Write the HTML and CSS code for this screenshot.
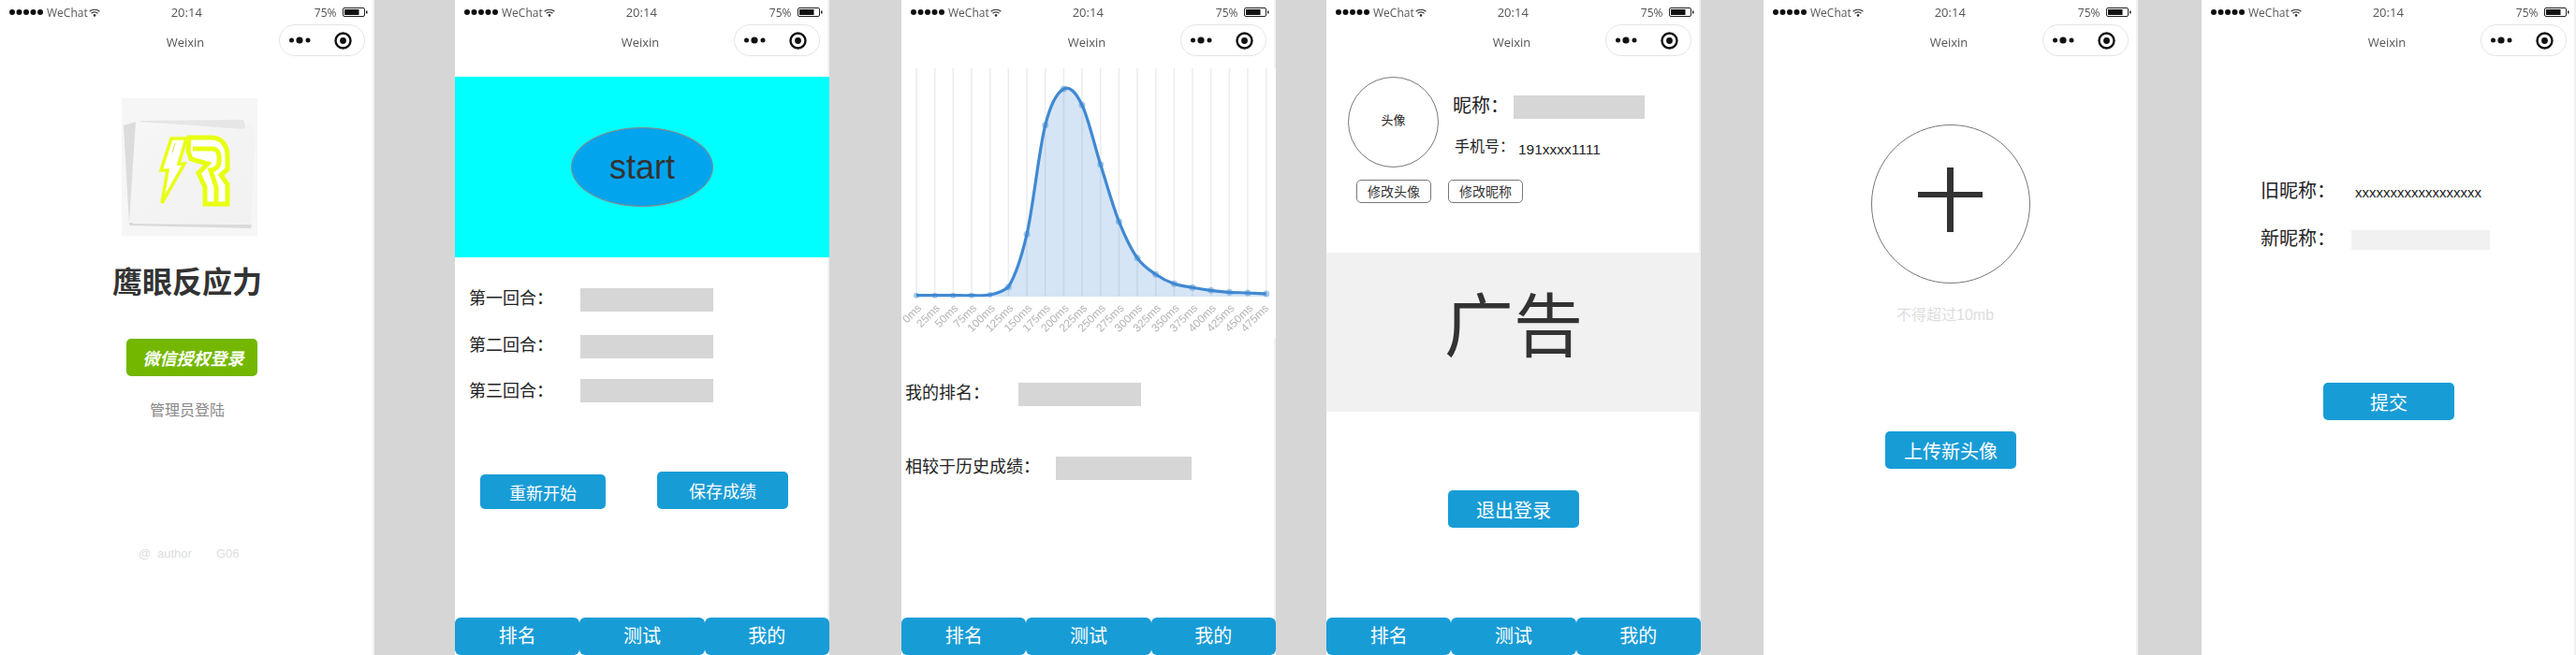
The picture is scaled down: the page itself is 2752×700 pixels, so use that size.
FILE: index.html
```html
<!DOCTYPE html>
<html lang="zh-CN">

<head>
    <meta charset="UTF-8">
    <title>鹰眼反应力</title>
    <link rel="stylesheet" href="styles.css">
</head>

<body>
    <svg class="icon-defs" width="0" height="0">
        <symbol id="signal" viewBox="0 0 37 8">
            <circle cx="3" cy="4" r="3" />
            <circle cx="10.5" cy="4" r="3" />
            <circle cx="18" cy="4" r="3" />
            <circle cx="25.5" cy="4" r="3" />
            <circle cx="33" cy="4" r="3" />
        </symbol>
        <symbol id="wifi" viewBox="0 0 12 9">
            <path d="M0.6 3.2 C3.6 0.6 8.4 0.6 11.4 3.2" fill="none" stroke="#333" stroke-width="1.2" />
            <path d="M2.5 5.2 C4.5 3.6 7.5 3.6 9.5 5.2" fill="none" stroke="#333" stroke-width="1.2" />
            <circle cx="6" cy="7.4" r="1.3" fill="#333" />
        </symbol>
        <symbol id="battery" viewBox="0 0 28 10">
            <rect x="0.5" y="0.5" width="23" height="9" rx="1.5" fill="#fff" stroke="#222" />
            <rect x="2" y="2" width="15.5" height="6" fill="#111" />
            <rect x="25" y="3.5" width="1.5" height="3" fill="#222" />
        </symbol>
        <symbol id="capsule-icons" viewBox="0 0 92 34">
            <circle cx="13.5" cy="17" r="2.5" fill="#111" />
            <circle cx="22" cy="17" r="3.6" fill="#111" />
            <circle cx="31" cy="17" r="2.5" fill="#111" />
            <circle cx="68.5" cy="17.5" r="8" fill="none" stroke="#111" stroke-width="2.4" />
            <circle cx="68.5" cy="17.5" r="3.4" fill="#111" />
        </symbol>
    </svg>

    <div class="screens">

        <!-- login -->
        <section class="phone">
            <header class="top">
                <div class="status">
                    <svg class="signal"><use href="#signal" /></svg>
                    <span class="carrier">WeChat</span>
                    <svg class="wifi"><use href="#wifi" /></svg>
                    <span class="time">20:14</span>
                    <span class="percent">75%</span>
                    <svg class="battery"><use href="#battery" /></svg>
                </div>
                <div class="nav">
                    <span class="nav-title">Weixin</span>
                    <div class="capsule"><svg class="capsule-svg"><use href="#capsule-icons" /></svg></div>
                </div>
            </header>
            <main class="screen-body">
                <div class="logo">
                    <svg viewBox="0 0 145 147" width="145" height="147">
                        <defs>
                            <linearGradient id="sheet" x1="0" y1="0" x2="1" y2="1">
                                <stop offset="0" stop-color="#f7f7f7" />
                                <stop offset="0.5" stop-color="#f3f3f3" />
                                <stop offset="1" stop-color="#f1f1f1" />
                            </linearGradient>
                        </defs>
                        <rect width="145" height="147" fill="#f6f6f6" />
                        <path d="M2 29 L16 25 L12 134 L8 134 Z" fill="#dcdcdc" />
                        <path d="M20 24 L130 23 L133 33 L20 28 Z" fill="#e6e6e6" />
                        <path d="M139 135 L8 134 L8 136 L138 139 Z" fill="#dadada" />
                        <path d="M15 25 C60 28 100 30 130 34 L133 28 C138 28 143 32 143 38 L138 134 L8 133 Z" fill="url(#sheet)" />
                        <path d="M53 43 L69 43 L61 70 L67 70 L43 112 L49 77 L42 77 Z" fill="#fff" stroke="#e8ff14" stroke-width="3.5" stroke-linejoin="miter" />
                        <path d="M57 48 L54 58" stroke="#d9e04a" stroke-width="1" fill="none" />
                        <path d="M72 42 L96 42 C107 42 113 51 113 62 L113 76 L106 82 L113 92 L113 113 L89 113 L89 95 L82 80 L92 70 L74 65 L71 56 Z" fill="#fff" stroke="#e8ff14" stroke-width="5" />
                        <path d="M76 54 L96 54 C102 54 104 58 104 62 L104 68 C104 73 100 76 95 77 L101 95 L101 113" fill="none" stroke="#e8ff14" stroke-width="5" />
                    </svg>
                </div>
                <h1 class="app-title">鹰眼反应力</h1>
                <button class="btn btn-wechat">微信授权登录</button>
                <div class="admin-link">管理员登陆</div>
                <div class="credit">
                    <span class="credit-at">@</span>
                    <span class="credit-author">author</span>
                    <span>G06</span>
                </div>
            </main>
        </section>

        <!-- test -->
        <section class="phone phone-test">
            <header class="top">
                <div class="status">
                    <svg class="signal"><use href="#signal" /></svg>
                    <span class="carrier">WeChat</span>
                    <svg class="wifi"><use href="#wifi" /></svg>
                    <span class="time">20:14</span>
                    <span class="percent">75%</span>
                    <svg class="battery"><use href="#battery" /></svg>
                </div>
                <div class="nav">
                    <span class="nav-title">Weixin</span>
                    <div class="capsule"><svg class="capsule-svg"><use href="#capsule-icons" /></svg></div>
                </div>
            </header>
            <main class="screen-body">
                <div class="start-area">
                    <div class="start-btn">start</div>
                </div>
                <div class="round-row round-first"><span class="round-label">第一回合：</span><span class="value-box round-box"></span></div>
                <div class="round-row round-second"><span class="round-label">第二回合：</span><span class="value-box round-box"></span></div>
                <div class="round-row round-third"><span class="round-label">第三回合：</span><span class="value-box round-box"></span></div>
                <div class="test-actions">
                    <button class="btn btn-restart">重新开始</button>
                    <button class="btn btn-save">保存成绩</button>
                </div>
            </main>
            <nav class="tabs">
                <div class="tab">排名</div>
                <div class="tab">测试</div>
                <div class="tab">我的</div>
            </nav>
        </section>

        <!-- rank -->
        <section class="phone phone-rank">
            <header class="top">
                <div class="status">
                    <svg class="signal"><use href="#signal" /></svg>
                    <span class="carrier">WeChat</span>
                    <svg class="wifi"><use href="#wifi" /></svg>
                    <span class="time">20:14</span>
                    <span class="percent">75%</span>
                    <svg class="battery"><use href="#battery" /></svg>
                </div>
                <div class="nav">
                    <span class="nav-title">Weixin</span>
                    <div class="capsule"><svg class="capsule-svg"><use href="#capsule-icons" /></svg></div>
                </div>
            </header>
            <main class="screen-body">
                <svg class="chart" viewBox="0 0 400 289" width="400" height="289">
                    <g class="chart-grid">
                        <path d="M16 0V244M35.7 0V244M55.3 0V244M75 0V244M94.7 0V244M114.3 0V244M134 0V244M153.7 0V244M173.4 0V244M193 0V244M212.7 0V244M232.4 0V244M252 0V244M271.7 0V244M291.4 0V244M311 0V244M330.7 0V244M350.4 0V244M370 0V244M389.7 0V244" />
                    </g>
                    <path class="chart-area" d="M16 242.7 C22.6 242.7 29.1 242.7 35.7 242.7 C42.3 242.7 48.7 242.7 55.3 242.7 C61.9 242.7 68.4 242.8 75 242.7 C81.6 242.6 88.1 243.2 94.7 242 C101.3 240.8 107.7 239 114.3 233.7 C120.9 222.9 127.4 206.1 134 177.3 C140.6 148.5 147.1 86.6 153.7 60.7 C160.3 34.8 166.8 25.6 173.4 22 C180 18.4 186.4 25.8 193 39.3 C199.6 52.8 206.1 82 212.7 102.7 C219.3 123.4 225.8 147 232.4 163.7 C239 180.4 245.4 193.3 252 202.7 C258.6 212.1 265.1 215.7 271.7 220.3 C278.3 224.9 284.8 228 291.4 230.3 C298 232.6 304.4 233.1 311 234.3 C317.6 235.5 324.1 236.5 330.7 237.3 C337.3 238.1 343.8 238.85 350.4 239.3 C357 239.75 363.4 239.7 370 240 C376.6 240.3 383.1 240.8 389.7 241 V244 H16 Z" />
                    <path class="chart-line" d="M16 242.7 C22.6 242.7 29.1 242.7 35.7 242.7 C42.3 242.7 48.7 242.7 55.3 242.7 C61.9 242.7 68.4 242.8 75 242.7 C81.6 242.6 88.1 243.2 94.7 242 C101.3 240.8 107.7 239 114.3 233.7 C120.9 222.9 127.4 206.1 134 177.3 C140.6 148.5 147.1 86.6 153.7 60.7 C160.3 34.8 166.8 25.6 173.4 22 C180 18.4 186.4 25.8 193 39.3 C199.6 52.8 206.1 82 212.7 102.7 C219.3 123.4 225.8 147 232.4 163.7 C239 180.4 245.4 193.3 252 202.7 C258.6 212.1 265.1 215.7 271.7 220.3 C278.3 224.9 284.8 228 291.4 230.3 C298 232.6 304.4 233.1 311 234.3 C317.6 235.5 324.1 236.5 330.7 237.3 C337.3 238.1 343.8 238.85 350.4 239.3 C357 239.75 363.4 239.7 370 240 C376.6 240.3 383.1 240.8 389.7 241" />
                    <g class="chart-points">
                        <circle cx="16" cy="242.7" r="3" /><circle cx="35.7" cy="242.7" r="3" /><circle cx="55.3" cy="242.7" r="3" /><circle cx="75" cy="242.7" r="3" /><circle cx="94.7" cy="242" r="3" />
                        <circle cx="114.3" cy="233.7" r="3.5" /><circle cx="134" cy="177.3" r="3.5" /><circle cx="153.7" cy="60.7" r="3.5" /><circle cx="173.4" cy="22" r="3.5" /><circle cx="193" cy="39.3" r="3.5" />
                        <circle cx="212.7" cy="102.7" r="3.5" /><circle cx="232.4" cy="163.7" r="3.5" /><circle cx="252" cy="202.7" r="3.5" /><circle cx="271.7" cy="220.3" r="3.5" /><circle cx="291.4" cy="230.3" r="3.5" />
                        <circle cx="311" cy="234.3" r="3.5" /><circle cx="330.7" cy="237.3" r="3.5" /><circle cx="350.4" cy="239.3" r="3.5" /><circle cx="370" cy="240" r="3.5" /><circle cx="389.7" cy="241" r="3.5" />
                    </g>
                    <g class="chart-labels">
                        <text transform="translate(22 257) rotate(-45)">0ms</text>
                        <text transform="translate(41.7 257) rotate(-45)">25ms</text>
                        <text transform="translate(61.3 257) rotate(-45)">50ms</text>
                        <text transform="translate(81 257) rotate(-45)">75ms</text>
                        <text transform="translate(100.7 257) rotate(-45)">100ms</text>
                        <text transform="translate(120.3 257) rotate(-45)">125ms</text>
                        <text transform="translate(140 257) rotate(-45)">150ms</text>
                        <text transform="translate(159.7 257) rotate(-45)">175ms</text>
                        <text transform="translate(179.4 257) rotate(-45)">200ms</text>
                        <text transform="translate(199 257) rotate(-45)">225ms</text>
                        <text transform="translate(218.7 257) rotate(-45)">250ms</text>
                        <text transform="translate(238.4 257) rotate(-45)">275ms</text>
                        <text transform="translate(258 257) rotate(-45)">300ms</text>
                        <text transform="translate(277.7 257) rotate(-45)">325ms</text>
                        <text transform="translate(297.4 257) rotate(-45)">350ms</text>
                        <text transform="translate(317 257) rotate(-45)">375ms</text>
                        <text transform="translate(336.7 257) rotate(-45)">400ms</text>
                        <text transform="translate(356.4 257) rotate(-45)">425ms</text>
                        <text transform="translate(376 257) rotate(-45)">450ms</text>
                        <text transform="translate(393 257) rotate(-45)">475ms</text>
                    </g>
                </svg>
                <div class="rank-row rank-first"><span class="rank-label">我的排名：</span><span class="value-box"></span></div>
                <div class="rank-row rank-second"><span class="rank-label">相较于历史成绩：</span><span class="value-box"></span></div>
            </main>
            <nav class="tabs">
                <div class="tab">排名</div>
                <div class="tab">测试</div>
                <div class="tab">我的</div>
            </nav>
        </section>

        <!-- profile -->
        <section class="phone phone-profile">
            <header class="top">
                <div class="status">
                    <svg class="signal"><use href="#signal" /></svg>
                    <span class="carrier">WeChat</span>
                    <svg class="wifi"><use href="#wifi" /></svg>
                    <span class="time">20:14</span>
                    <span class="percent">75%</span>
                    <svg class="battery"><use href="#battery" /></svg>
                </div>
                <div class="nav">
                    <span class="nav-title">Weixin</span>
                    <div class="capsule"><svg class="capsule-svg"><use href="#capsule-icons" /></svg></div>
                </div>
            </header>
            <main class="screen-body">
                <div class="profile">
                    <div class="profile-top">
                        <div class="avatar">头像</div>
                        <div class="profile-info">
                            <div class="nick-row"><span class="nick-label">昵称：</span><span class="value-box nick-box"></span></div>
                            <div class="phone-row"><span class="phone-label">手机号：</span><span class="phone-value">191xxxx1111</span></div>
                        </div>
                    </div>
                    <div class="profile-actions">
                        <button class="btn-outline">修改头像</button>
                        <button class="btn-outline">修改昵称</button>
                    </div>
                </div>
                <div class="ad">广告</div>
                <button class="btn btn-logout">退出登录</button>
            </main>
            <nav class="tabs">
                <div class="tab">排名</div>
                <div class="tab">测试</div>
                <div class="tab">我的</div>
            </nav>
        </section>

        <!-- upload avatar -->
        <section class="phone phone-upload">
            <header class="top">
                <div class="status">
                    <svg class="signal"><use href="#signal" /></svg>
                    <span class="carrier">WeChat</span>
                    <svg class="wifi"><use href="#wifi" /></svg>
                    <span class="time">20:14</span>
                    <span class="percent">75%</span>
                    <svg class="battery"><use href="#battery" /></svg>
                </div>
                <div class="nav">
                    <span class="nav-title">Weixin</span>
                    <div class="capsule"><svg class="capsule-svg"><use href="#capsule-icons" /></svg></div>
                </div>
            </header>
            <main class="screen-body">
                <div class="upload-circle">
                    <svg class="plus" viewBox="0 0 70 70" width="70" height="70">
                        <rect x="0" y="26" width="69" height="6" fill="#333" />
                        <rect x="31" y="0" width="7" height="69" fill="#333" />
                    </svg>
                </div>
                <div class="upload-hint">不得超过10mb</div>
                <button class="btn btn-upload">上传新头像</button>
            </main>
        </section>

        <!-- change nickname -->
        <section class="phone phone-rename">
            <header class="top">
                <div class="status">
                    <svg class="signal"><use href="#signal" /></svg>
                    <span class="carrier">WeChat</span>
                    <svg class="wifi"><use href="#wifi" /></svg>
                    <span class="time">20:14</span>
                    <span class="percent">75%</span>
                    <svg class="battery"><use href="#battery" /></svg>
                </div>
                <div class="nav">
                    <span class="nav-title">Weixin</span>
                    <div class="capsule"><svg class="capsule-svg"><use href="#capsule-icons" /></svg></div>
                </div>
            </header>
            <main class="screen-body">
                <div class="rename-row rename-old"><span class="rename-label">旧昵称：</span><span class="old-value">xxxxxxxxxxxxxxxxxx</span></div>
                <div class="rename-row rename-new"><span class="rename-label">新昵称：</span><span class="new-input"></span></div>
                <button class="btn btn-submit">提交</button>
            </main>
        </section>

    </div>
</body>

</html>
```

FILE: styles.css
```css
* {
    box-sizing: border-box;
}

body {
    margin: 0;
    background-color: #d6d6d6;
    font-family: "Liberation Sans", "Noto Sans CJK SC", sans-serif;
    color: #222;
}

.icon-defs {
    position: absolute;
}

.screens {
    display: flex;
    width: 2752px;
    height: 700px;
    overflow: hidden;
}

.phone {
    flex: none;
    display: flex;
    flex-direction: column;
    width: 400px;
    height: 700px;
    background-color: #fff;
    box-shadow: inset -2px 0 #f1f1f1;
}

.phone-test {
    margin-left: 86px;
}

.phone-rank {
    margin-left: 77px;
}

.phone-profile {
    margin-left: 54px;
}

.phone-upload {
    margin-left: 67px;
}

.phone-rename {
    margin-left: 68px;
}

/* status bar + nav */
.top {
    flex: none;
    height: 60px;
    font-family: "Open Sans", sans-serif;
    color: #555;
    filter: blur(0.3px);
}

.status {
    display: flex;
    align-items: center;
    height: 26px;
    padding-left: 10px;
}

.signal {
    width: 37px;
    height: 8px;
    fill: #111;
}

.carrier {
    margin-left: 3px;
    font-size: 12px;
}

.wifi {
    width: 12px;
    height: 9px;
    margin-left: 1px;
}

.time {
    margin-left: 76px;
    font-size: 13px;
}

.percent {
    margin-left: 120px;
    font-size: 12px;
}

.battery {
    width: 28px;
    height: 10px;
    margin-left: 6px;
}

.nav {
    display: grid;
    grid-template-columns: 1fr auto 1fr;
    align-items: center;
    height: 34px;
    padding: 0 10px 0 6px;
}

.nav-title {
    grid-column: 2;
    padding-top: 4px;
    font-size: 13px;
}

.capsule {
    grid-column: 3;
    justify-self: end;
    width: 92px;
    height: 34px;
    border: 1px solid #e4e4e4;
    border-radius: 17px;
}

.capsule-svg {
    display: block;
    width: 92px;
    height: 34px;
    margin: -1px;
}

.screen-body {
    flex: 1;
    min-height: 0;
}

/* shared pieces */
.btn {
    display: block;
    width: 140px;
    height: 40px;
    padding: 0;
    border: 0;
    border-radius: 5px;
    background-color: #189cd6;
    color: #fff;
    font-family: inherit;
    font-size: 20px;
}

.value-box {
    display: block;
    flex: none;
    height: 25px;
    background-color: #d6d6d6;
}

.tabs {
    flex: none;
    display: flex;
    height: 40px;
}

.tab {
    flex: 1;
    border-radius: 6px;
    background-color: #189cd6;
    color: #fff;
    font-size: 20px;
    line-height: 40px;
    text-align: center;
}

/* login */
.logo {
    width: 145px;
    height: 147px;
    margin: 45px 0 0 130px;
    filter: blur(0.4px);
}

.logo svg {
    display: block;
}

.app-title {
    width: 160px;
    margin: 30px 0 0 120px;
    color: #333;
    font-size: 32px;
    font-weight: 700;
    line-height: 40px;
}

.btn-wechat {
    margin: 40px 0 0 135px;
    padding-left: 3px;
    background-color: #73b700;
    font-size: 18px;
    font-style: italic;
    font-weight: 700;
}

.admin-link {
    margin: 25px 0 0 160px;
    color: #888;
    font-size: 16px;
    line-height: 24px;
}

.credit {
    display: flex;
    margin: 133px 0 0 148px;
    color: #ddd;
    font-size: 13px;
    line-height: 16px;
}

.credit-at {
    width: 20px;
}

.credit-author {
    width: 63px;
}

/* test */
.start-area {
    display: flex;
    align-items: center;
    justify-content: center;
    height: 193px;
    margin-top: 22px;
    background-color: #0ff;
}

.start-btn {
    width: 152px;
    height: 85px;
    border: 1px solid #888;
    border-radius: 50%;
    background-color: #03a4ee;
    color: #333;
    font-size: 36px;
    line-height: 83px;
    text-align: center;
}

.round-row {
    display: flex;
    margin-left: 15px;
}

.round-first {
    margin-top: 33px;
}

.round-second {
    margin-top: 25px;
}

.round-third {
    margin-top: 22px;
}

.round-label {
    width: 119px;
    font-size: 18px;
    line-height: 22px;
}

.round-third .round-label {
    padding-top: 2px;
}

.round-box {
    width: 142px;
}

.test-actions {
    display: flex;
    align-items: flex-end;
    margin: 74px 0 0 27px;
}

.btn-restart {
    width: 134px;
    height: 37px;
    font-size: 18px;
}

.btn-save {
    margin-left: 55px;
    font-size: 18px;
}

/* rank */
.chart {
    display: block;
    margin-top: 13px;
    overflow: visible;
    background-color: #fff;
    filter: blur(0.4px);
}

.chart-grid path {
    fill: none;
    stroke: #ececf0;
    stroke-width: 1.5;
}

.chart-area {
    fill: rgba(74, 144, 217, 0.23);
}

.chart-line {
    fill: none;
    stroke: #4089d2;
    stroke-width: 3.2;
}

.chart-points circle {
    fill: rgba(63, 136, 208, 0.45);
}

.chart-labels text {
    fill: #b4b4b4;
    font-size: 12px;
    text-anchor: end;
}

.rank-row {
    display: flex;
    margin-left: 4px;
}

.rank-first {
    margin-top: 47px;
}

.rank-second {
    margin-top: 54px;
}

.rank-label {
    font-size: 18px;
    line-height: 22px;
}

.rank-first .rank-label {
    width: 121px;
}

.rank-first .value-box {
    width: 131px;
}

.rank-second .rank-label {
    width: 161px;
}

.rank-second .value-box {
    width: 145px;
}

/* profile */
.profile {
    height: 210px;
    padding-top: 22px;
}

.profile-top {
    display: flex;
    margin-left: 23px;
}

.avatar {
    flex: none;
    width: 97px;
    height: 97px;
    border: 1px solid #777;
    border-radius: 50%;
    font-size: 13px;
    line-height: 91px;
    text-align: center;
}

.profile-info {
    margin-left: 15px;
    padding-top: 20px;
}

.nick-row {
    display: flex;
}

.nick-label {
    width: 65px;
    font-size: 20px;
    line-height: 22px;
}

.nick-box {
    width: 140px;
}

.phone-row {
    display: flex;
    margin: 20px 0 0 2px;
}

.phone-label {
    width: 68px;
    font-size: 16px;
    line-height: 20px;
}

.phone-value {
    margin-top: 3px;
    font-size: 15.5px;
    line-height: 20px;
}

.profile-actions {
    display: flex;
    gap: 18px;
    margin: 13px 0 0 32px;
}

.btn-outline {
    width: 80px;
    height: 25px;
    padding: 0;
    border: 1px solid #777;
    border-radius: 5px;
    background-color: #fff;
    color: #333;
    font-family: inherit;
    font-size: 14px;
    line-height: 20px;
}

.ad {
    height: 170px;
    background-color: #f1f1f1;
    color: #333;
    font-size: 74px;
    line-height: 160px;
    text-align: center;
}

.btn-logout {
    margin: 84px 0 0 130px;
}

/* upload */
.upload-circle {
    display: flex;
    align-items: center;
    justify-content: center;
    width: 170px;
    height: 170px;
    margin: 73px 0 0 115px;
    border: 1px solid #777;
    border-radius: 50%;
}

.plus {
    margin-bottom: 8px;
}

.upload-hint {
    margin: 22px 0 0 142px;
    color: #ddd;
    font-size: 16px;
    line-height: 24px;
}

.btn-upload {
    margin: 112px 0 0 130px;
}

/* rename */
.rename-row {
    display: flex;
    margin-left: 63px;
    line-height: 28px;
}

.rename-old {
    height: 28px;
    margin-top: 130px;
}

.rename-new {
    height: 28px;
    margin-top: 23px;
}

.rename-label {
    width: 97px;
    font-size: 20px;
}

.old-value {
    margin: 3px 0 0 4px;
    font-size: 15px;
    line-height: 25px;
}

.new-input {
    display: block;
    width: 148px;
    height: 21px;
    margin-top: 5px;
    background-color: #f1f1f1;
}

.btn-submit {
    margin: 140px 0 0 130px;
}
```
